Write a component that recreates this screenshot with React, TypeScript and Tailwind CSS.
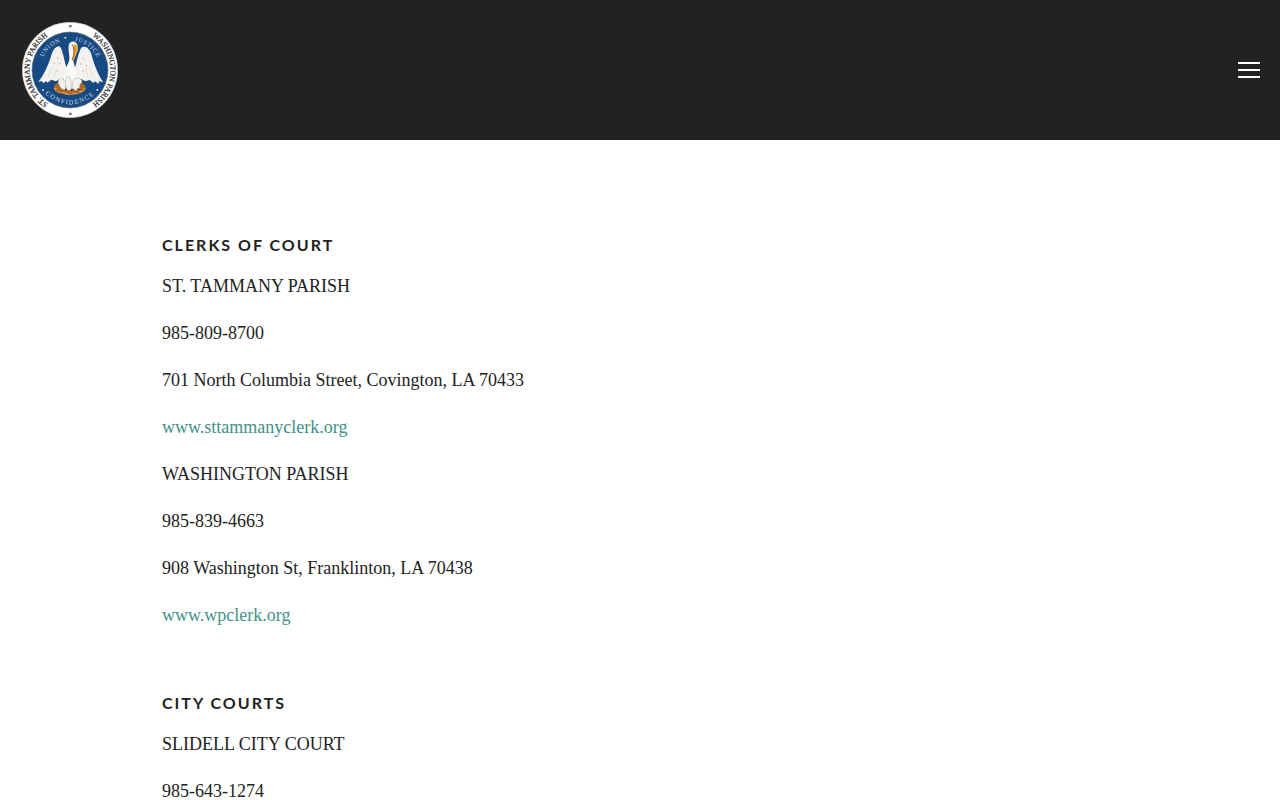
import React from 'react';

type Office = {
  name: string;
  phone: string;
  address?: string;
  website?: string;
};

const clerks: Office[] = [
  {
    name: 'ST. TAMMANY PARISH',
    phone: '985-809-8700',
    address: '701 North Columbia Street, Covington, LA 70433',
    website: 'www.sttammanyclerk.org',
  },
  {
    name: 'WASHINGTON PARISH',
    phone: '985-839-4663',
    address: '908 Washington St, Franklinton, LA 70438',
    website: 'www.wpclerk.org',
  },
];

const cityCourts: Office[] = [{ name: 'SLIDELL CITY COURT', phone: '985-643-1274' }];

const Seal = () => (
  <svg viewBox="36 36 288 288" className="w-24 h-24" role="img" aria-label="St. Tammany and Washington Parish seal">
    <defs>
      <path id="outer-ring" d="M180 301 A121 121 0 0 1 180 59 A121 121 0 0 1 180 301" />
      <path id="inner-ring" d="M180 269 A89 89 0 0 1 180 91 A89 89 0 0 1 180 269" />
      <path id="lower-ring" d="M77 180 A103 103 0 0 0 283 180" />
    </defs>
    <circle cx="180" cy="180" r="143" fill="#fff" stroke="#c9c9c9" strokeWidth="2" />
    <circle cx="180" cy="180" r="114" fill="#174a82" stroke="#5f6468" strokeWidth="2" />

    {/* Ring lettering */}
    <g fontFamily="'Liberation Serif', serif" textAnchor="middle">
      <g fontSize="23" fill="#1c1c1c" stroke="#1c1c1c" strokeWidth="0.5">
        <text><textPath href="#outer-ring" startOffset="25%">ST. TAMMANY PARISH</textPath></text>
        <text><textPath href="#outer-ring" startOffset="75%">WASHINGTON PARISH</textPath></text>
      </g>
      <g fontSize="19" letterSpacing="2" fill="#d3deea">
        <text><textPath href="#inner-ring" startOffset="38.5%">UNION</textPath></text>
        <text><textPath href="#inner-ring" startOffset="60.5%">JUSTICE</textPath></text>
        <text fontSize="20" letterSpacing="4"><textPath href="#lower-ring" startOffset="50%">CONFIDENCE</textPath></text>
      </g>
    </g>
    <g fill="#d3deea">
      <circle cx="166" cy="83" r="3" />
      <circle cx="99" cy="240" r="3" />
      <circle cx="262" cy="240" r="3" />
    </g>
    <path d="M177 45h8v7h-8z M177 308h8v7h-8z" fill="#777" />

    {/* Wings */}
    <path d="M145 109 C136 111 129 120 125 132 C119 153 107 188 85 216 L96 213 L99 220 L108 214 L113 218 L124 209 L137 214 L150 207 L169 207 L171 178 C165 160 160 132 153 115 C151 110 148 108 145 109Z" fill="#f2f1ed" />
    <path d="M221 110 C232 109 240 119 244 132 C250 154 260 188 280 217 L268 214 L265 221 L255 214 L250 219 L239 210 L226 214 L214 207 L196 207 L194 178 C199 158 204 134 212 116 C214 112 217 110 221 110Z" fill="#f2f1ed" />
    <g fill="none" stroke="#d6d8d8" strokeWidth="2">
      <path d="M128 170 L114 204 M140 172 L132 203" />
      <path d="M238 170 L251 204 M227 172 L234 203" />
    </g>
    <g fill="#c5a177">
      <circle cx="143" cy="144" r="2" /><circle cx="150" cy="160" r="2" /><circle cx="132" cy="160" r="2" />
      <circle cx="142" cy="184" r="2" /><circle cx="220" cy="146" r="2" /><circle cx="213" cy="162" r="2" />
      <circle cx="229" cy="166" r="2" /><circle cx="219" cy="183" r="2" />
    </g>

    {/* Nest */}
    <ellipse cx="179" cy="233" rx="48" ry="22" fill="#a96427" />
    <path d="M134 234 C147 256 211 257 224 234" fill="none" stroke="#dc9b45" strokeWidth="7" />
    <g fill="none" stroke="#613a24" strokeWidth="2">
      <path d="M137 240 L155 246 M148 251 L165 252 M170 248 L188 251 M192 246 L209 248 M209 241 L222 237" />
    </g>

    {/* Pelican */}
    <path d="M176 107 C177 96 190 91 198 98 C207 106 204 124 197 135 L190 154 L197 180 L202 222 L186 236 L170 232 L160 218 L164 182 L175 159 C183 143 174 128 176 107Z" fill="#fafaf6" />
    <path d="M193 103 C202 102 206 112 202 124 L192 149 L186 154 L191 133 L188 117Z" fill="#e5a42f" />
    <path d="M190 109 L193 125 L187 150" fill="none" stroke="#b9562a" strokeWidth="3" />
    <circle cx="188" cy="106" r="2" fill="#333" />

    {/* Chicks */}
    <g fill="#f3f1ec" stroke="#a9aaa6" strokeWidth="1.5">
      <path d="M145 220 C142 207 153 201 159 206 L168 221 L166 240 L154 236Z" />
      <path d="M168 232 C163 206 172 190 181 203 L185 222 L182 241 L172 241Z" />
      <path d="M187 235 C185 207 197 199 207 206 C218 207 219 217 210 222 L208 235 L197 242Z" />
    </g>
    <path d="M165 239 h6 M182 241 h6 M202 238 h6" stroke="#74341f" strokeWidth="5" />
  </svg>
);

const OfficeDetails = ({ office }: { office: Office }) => (
  <>
    <p>{office.name}</p>
    <p>{office.phone}</p>
    {office.address && <p>{office.address}</p>}
    {office.website && (
      <p>
        <a href={`http://${office.website}`} className="text-[#42918a] hover:underline">{office.website}</a>
      </p>
    )}
  </>
);

const Directory = ({ title, offices }: { title: string; offices: Office[] }) => (
  <section>
    <h2 className="mb-[15px] font-['Lato',sans-serif] text-base leading-6 font-bold tracking-[2px]">{title}</h2>
    <div className="flex flex-col gap-[18px] font-['Liberation_Serif',serif] text-lg leading-[29px]">
      {offices.map((office) => (
        <OfficeDetails key={office.name} office={office} />
      ))}
    </div>
  </section>
);

const App = () => {
  return (
    <div className="min-h-screen bg-white text-[#222]">
      {/* Header */}
      <header className="flex items-center justify-between bg-[#222] pl-[22px] pr-5 py-[22px]">
        <a href="/" aria-label="Home">
          <Seal />
        </a>
        <button type="button" aria-label="Open menu" className="flex flex-col gap-[5px] cursor-pointer">
          <span className="block w-[22px] h-0.5 bg-white"></span>
          <span className="block w-[22px] h-0.5 bg-white"></span>
          <span className="block w-[22px] h-0.5 bg-white"></span>
        </button>
      </header>

      {/* Court contacts */}
      <main className="mx-auto flex max-w-[1020px] flex-col gap-[61px] px-8 pt-[93px] pb-24">
        <Directory title="CLERKS OF COURT" offices={clerks} />
        <Directory title="CITY COURTS" offices={cityCourts} />
      </main>
    </div>
  );
};

export default App;
